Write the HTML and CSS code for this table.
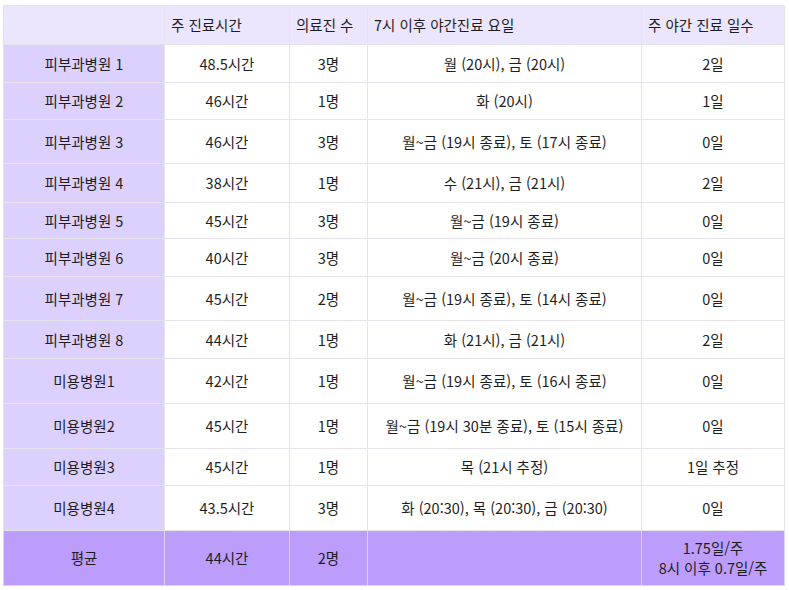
FILE: index.html
```html
<!DOCTYPE html>
<html lang="ko">
<head>
<meta charset="utf-8">
<link rel="stylesheet" href="styles.css">
</head>
<body>
<table class="grid">
  <colgroup>
    <col class="c1"><col class="c2"><col class="c3"><col class="c4"><col class="c5">
  </colgroup>
  <thead>
    <tr class="h39"><th></th><th>주 진료시간</th><th>의료진 수</th><th>7시 이후 야간진료 요일</th><th>주 야간 진료 일수</th></tr>
  </thead>
  <tbody>
    <tr class="h38"><th>피부과병원 1</th><td>48.5시간</td><td>3명</td><td>월 (20시), 금 (20시)</td><td>2일</td></tr>
    <tr class="h37"><th>피부과병원 2</th><td>46시간</td><td>1명</td><td>화 (20시)</td><td>1일</td></tr>
    <tr class="h44"><th>피부과병원 3</th><td>46시간</td><td>3명</td><td>월~금 (19시 종료), 토 (17시 종료)</td><td>0일</td></tr>
    <tr class="h39"><th>피부과병원 4</th><td>38시간</td><td>1명</td><td>수 (21시), 금 (21시)</td><td>2일</td></tr>
    <tr class="h36"><th>피부과병원 5</th><td>45시간</td><td>3명</td><td>월~금 (19시 종료)</td><td>0일</td></tr>
    <tr class="h38"><th>피부과병원 6</th><td>40시간</td><td>3명</td><td>월~금 (20시 종료)</td><td>0일</td></tr>
    <tr class="h44"><th>피부과병원 7</th><td>45시간</td><td>2명</td><td>월~금 (19시 종료), 토 (14시 종료)</td><td>0일</td></tr>
    <tr class="h38"><th>피부과병원 8</th><td>44시간</td><td>1명</td><td>화 (21시), 금 (21시)</td><td>2일</td></tr>
    <tr class="h45"><th>미용병원1</th><td>42시간</td><td>1명</td><td>월~금 (19시 종료), 토 (16시 종료)</td><td>0일</td></tr>
    <tr class="h45"><th>미용병원2</th><td>45시간</td><td>1명</td><td>월~금 (19시 30분 종료), 토 (15시 종료)</td><td>0일</td></tr>
    <tr class="h37"><th>미용병원3</th><td>45시간</td><td>1명</td><td>목 (21시 추정)</td><td>1일 추정</td></tr>
    <tr class="h45"><th>미용병원4</th><td>43.5시간</td><td>3명</td><td>화 (20:30), 목 (20:30), 금 (20:30)</td><td>0일</td></tr>
  </tbody>
  <tfoot>
    <tr class="h55 avg"><th>평균</th><td>44시간</td><td>2명</td><td></td><td>1.75일/주<br>8시 이후 0.7일/주</td></tr>
  </tfoot>
</table>
</body>
</html>
```
FILE: styles.css
```css
html, body {
  margin: 0;
  padding: 0;
  background: #ffffff;
}
body {
  padding: 5px 0 0 3px;
  font-family: "Noto Sans CJK KR", "Noto Sans", sans-serif;
  font-size: 14.5px;
  color: #1e1e1e;
}
.grid {
  border-collapse: collapse;
  table-layout: fixed;
  width: 781px;
}
.c1 { width: 161px; }
.c2 { width: 125px; }
.c3 { width: 78px; }
.c4 { width: 274px; }
.c5 { width: 143px; }
.grid th, .grid td {
  border: 1px solid #e6e4ea;
  padding: 0 6px;
  font-weight: 400;
  text-align: center;
  vertical-align: middle;
  line-height: 20px;
  white-space: nowrap;
}
.grid thead th {
  background: #ebe5fd;
  text-align: left;
}
.grid tbody th {
  background: #dcd0fe;
}
.grid .avg th, .grid .avg td {
  background: #bc9dfb;
  border-color: #ddd3f4;
}
.h36 { height: 36px; }
.h37 { height: 37px; }
.h38 { height: 38px; }
.h39 { height: 39px; }
.h44 { height: 44px; }
.h45 { height: 45px; }
.h55 { height: 55px; }
```
